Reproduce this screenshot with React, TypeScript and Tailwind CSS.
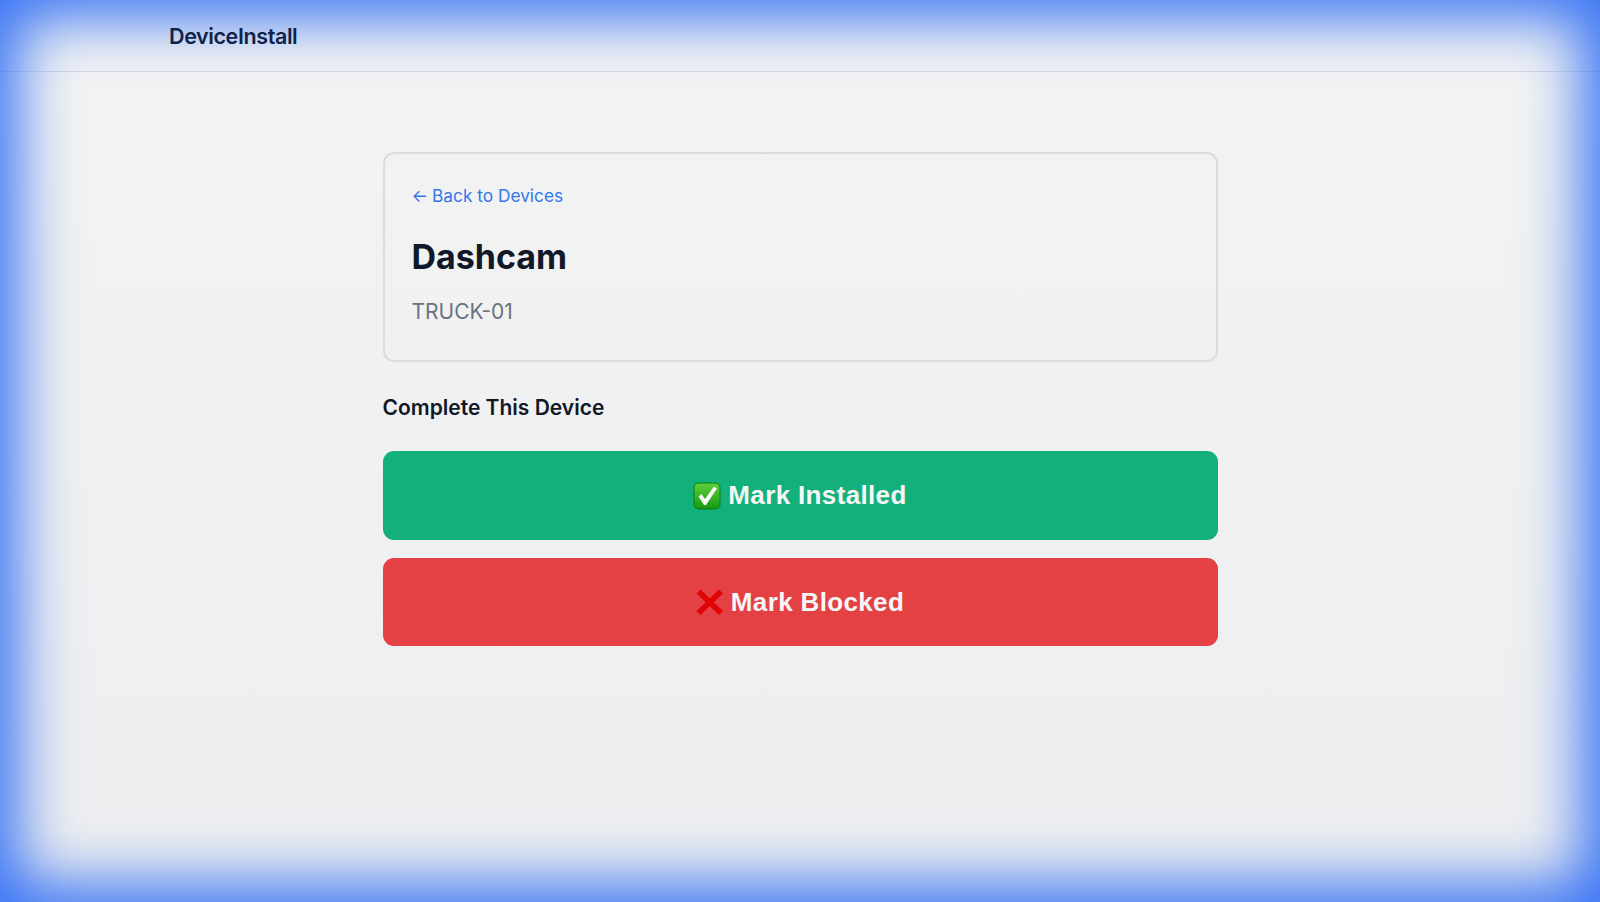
import React from "react";

function CheckEmoji() {
  return (
    <svg viewBox="0 0 28 28" className="h-[28px] w-[28px] shrink-0">
      <defs>
        <linearGradient id="checkBg" x1="0" y1="0" x2="0" y2="1">
          <stop offset="0" stopColor="#5fce3a" />
          <stop offset="1" stopColor="#169a12" />
        </linearGradient>
      </defs>
      <rect x="0.5" y="0.5" width="27" height="27" rx="5" fill="#0c7d0c" />
      <rect x="1.5" y="1.5" width="25" height="25" rx="4" fill="url(#checkBg)" />
      <path d="M5.5 14.5 L8.5 12 L12 17 L21 4.5 L24 6.5 L13 23 L11 23 Z" fill="#f6f8f6" />
    </svg>
  );
}

function CrossEmoji() {
  return (
    <svg viewBox="0 0 28 28" className="h-[28px] w-[28px] shrink-0">
      <path d="M2.5 3.5 L25 25 M25 3.5 L2.5 25" stroke="#e00404" strokeWidth="5.8" fill="none" />
    </svg>
  );
}

export default function App() {
  return (
    <div className="relative h-[902px] w-full overflow-hidden bg-gradient-to-b from-[#f3f3f3] to-[#edeef0] font-['Inter',sans-serif]">
      <nav className="h-[72px] border-b border-[#d5dbe6]">
        <div className="flex h-[72px] items-center pl-[169px]">
          <span className="relative z-10 text-[21.5px] font-semibold tracking-[-0.4px] text-[#10234b]">DeviceInstall</span>
        </div>
      </nav>

      <main className="mx-auto w-[835px] pt-[80px]">
        <div className="h-[210px] rounded-[11px] border-2 border-[#dbdce0] px-[27px] pt-[29px]">
          <a className="flex items-center gap-[4px] text-[17.3px] leading-[26px] text-[#3377ea]">
            <span>←</span>
            <span>Back to Devices</span>
          </a>
          <h1 className="mt-[25px] text-[34px] font-bold leading-[46px] text-[#111827]">Dashcam</h1>
          <p className="mt-[17px] text-[21px] leading-[30px] text-[#6b7280]">TRUCK-01</p>
        </div>

        <h2 className="mt-[31px] text-[21px] font-semibold leading-[30px] text-[#111827]">Complete This Device</h2>

        <div className="mt-[28px] flex flex-col gap-[18px]">
          <button className="flex h-[89px] items-center justify-center gap-[7px] rounded-[11px] bg-[#14b07c] font-['Liberation_Sans',sans-serif] text-[26px] font-bold tracking-[0.35px] text-[#f5f6f6]">
            <CheckEmoji />
            <span>Mark Installed</span>
          </button>
          <button className="flex h-[88px] items-center justify-center gap-[7px] rounded-[11px] bg-[#e44144] font-['Liberation_Sans',sans-serif] text-[26px] font-bold tracking-[0.35px] text-[#f5f6f6]">
            <CrossEmoji />
            <span>Mark Blocked</span>
          </button>
        </div>
      </main>

      {/* blue glow round the viewport */}
      <div className="pointer-events-none absolute inset-0 shadow-[inset_0_0_60px_18px_#3672f4]" />
    </div>
  );
}
